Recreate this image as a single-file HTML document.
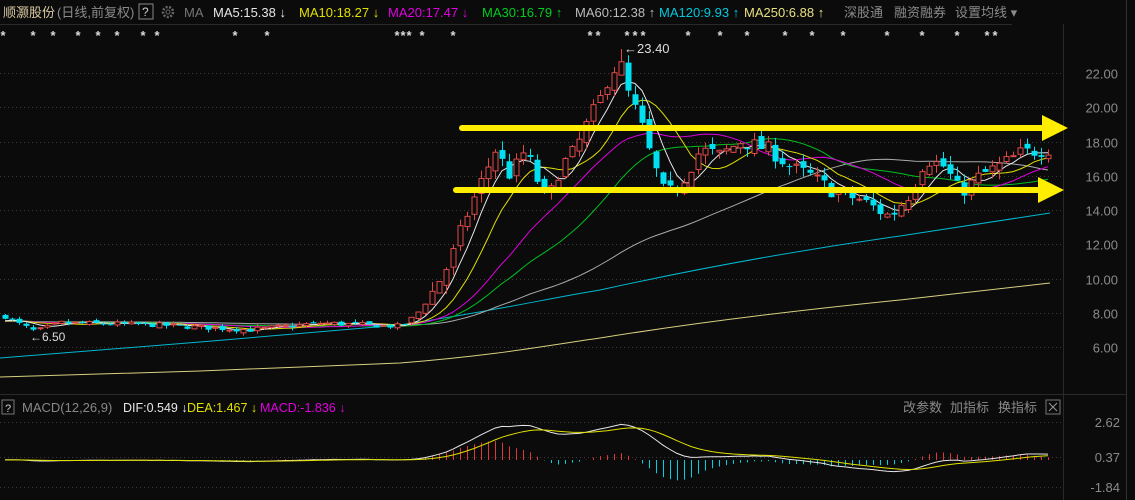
<!DOCTYPE html>
<html><head><meta charset="utf-8">
<style>
html,body{margin:0;padding:0;background:#0b0b0b;width:1135px;height:500px;overflow:hidden;font-family:"Liberation Sans","Noto Sans CJK SC",sans-serif;}
svg{position:absolute;left:0;top:0}
</style></head><body>
<svg id="s" width="1135" height="500" xmlns="http://www.w3.org/2000/svg" font-family="Liberation Sans, Noto Sans CJK SC, sans-serif">
<rect width="1135" height="500" fill="#0b0b0b"/>
<text x="3" y="17" font-size="13" fill="#d9c9a3">顺灏股份</text>
<text x="57" y="17" font-size="13" fill="#8a8a8a">(日线,前复权)</text>
<rect x="139" y="4" width="14" height="15" fill="none" stroke="#888" stroke-width="1"/>
<text x="142" y="16" font-size="12" fill="#ccc">?</text>
<circle cx="168" cy="12" r="5" fill="none" stroke="#666" stroke-width="2.5" stroke-dasharray="2 1.5"/>
<circle cx="168" cy="12" r="2" fill="#0b0b0b" stroke="#666"/>
<text x="184" y="17" font-size="13" fill="#777">MA</text>
<text x="213" y="17" font-size="13" fill="#e6e6e6">MA5:15.38 ↓</text>
<text x="299" y="17" font-size="13" fill="#e0e000">MA10:18.27 ↓</text>
<text x="388" y="17" font-size="13" fill="#e000e0">MA20:17.47 ↓</text>
<text x="482" y="17" font-size="13" fill="#00cc22">MA30:16.79 ↑</text>
<text x="575" y="17" font-size="13" fill="#bbb">MA60:12.38 ↑</text>
<text x="659" y="17" font-size="13" fill="#00c8dc">MA120:9.93 ↑</text>
<text x="744" y="17" font-size="13" fill="#e8e080">MA250:6.88 ↑</text>
<text x="844" y="17" font-size="13" fill="#8a8a8a">深股通</text>
<text x="894" y="17" font-size="13" fill="#8a8a8a">融资融券</text>
<text x="955" y="17" font-size="13" fill="#8a8a8a">设置均线 ▾</text>
<line x1="0" y1="24.5" x2="1012" y2="24.5" stroke="#2a2a2a"/>
<line x1="1063.5" y1="24" x2="1063.5" y2="500" stroke="#2a2a2a"/>
<line x1="1126.5" y1="0" x2="1126.5" y2="500" stroke="#333"/>
<line x1="0" y1="394.5" x2="1126" y2="394.5" stroke="#2a2a2a"/>
<g id="grid"></g>
<g id="axis" font-size="13" fill="#8a8a8a" text-anchor="end"></g>
<g id="stars" font-size="13" font-weight="bold" fill="#ddd" text-anchor="middle"></g>
<g id="lines" fill="none" stroke-width="1"></g>
<g id="candles"></g>
<text x="624" y="53" font-size="13" fill="#ddd">←23.40</text>
<text x="30" y="341" font-size="12" fill="#ddd">←6.50</text>
<line x1="462" y1="128" x2="1044" y2="128" stroke="#ffee00" stroke-width="6" stroke-linecap="round"/>
<polygon points="1042,115 1068,128 1042,141" fill="#ffee00"/>
<line x1="456" y1="190" x2="1040" y2="190" stroke="#ffee00" stroke-width="6" stroke-linecap="round"/>
<polygon points="1038,177 1064,190 1038,203" fill="#ffee00"/>
<rect x="2" y="400" width="12" height="14" fill="none" stroke="#777"/>
<text x="5" y="412" font-size="11" fill="#ccc">?</text>
<text x="22" y="412" font-size="13" fill="#888">MACD(12,26,9)</text>
<text x="123" y="412" font-size="12.5" fill="#e6e6e6">DIF:0.549 ↓</text>
<text x="187" y="412" font-size="12.5" fill="#e0e000">DEA:1.467 ↓</text>
<text x="260" y="412" font-size="12.5" fill="#e000e0">MACD:-1.836 ↓</text>
<text x="903" y="412" font-size="13" fill="#8a8a8a">改参数</text>
<text x="950" y="412" font-size="13" fill="#8a8a8a">加指标</text>
<text x="998" y="412" font-size="13" fill="#8a8a8a">换指标</text>
<rect x="1046" y="400" width="14" height="14" fill="none" stroke="#777"/>
<path d="M1049 403 L1057 411 M1057 403 L1049 411" stroke="#999"/>
<text x="1120" y="427" font-size="13" fill="#8a8a8a" text-anchor="end">2.62</text>
<text x="1120" y="462" font-size="13" fill="#8a8a8a" text-anchor="end">0.37</text>
<text x="1120" y="492" font-size="13" fill="#8a8a8a" text-anchor="end">-1.84</text>
<g id="macd" fill="none"></g>
</svg>
<script>
(function(){
var NS="http://www.w3.org/2000/svg";
function el(p,t,a){var e=document.createElementNS(NS,t);for(var k in a)e.setAttribute(k,a[k]);document.getElementById(p).appendChild(e);return e;}
function Y(p){return 73+(22-p)*17.125;}
for(var p=6;p<=22;p+=2){var y=Math.round(Y(p))+.5;el("grid","line",{x1:0,y1:y,x2:1063,y2:y,stroke:"#3a3a3a","stroke-dasharray":"1 3"});
var t=el("axis","text",{x:1118,y:y+5});t.textContent=p.toFixed(2);}
[422,457,487].forEach(function(y){el("grid","line",{x1:0,y1:y+.5,x2:1063,y2:y+.5,stroke:"#3a3a3a","stroke-dasharray":"1 3"});});
[3,33,53,78,98,117,143,157,235,267,397,403,409,422,453,590,598,627,635,643,688,720,747,785,812,843,887,922,957,987,995].forEach(function(x){var t=el("stars","text",{x:x,y:40});t.textContent="*";});
var K=[[5,7.8],[20,7.3],[35,6.9],[60,7.4],[150,7.3],[250,7.0],[320,7.4],[400,7.2],[415,7.8],[430,9],[450,11],[465,13.5],[480,15.5],[495,17.5],[510,16],[525,17.5],[540,15.3],[548,14.6],[560,16.5],[575,17.5],[588,19.2],[600,20.5],[610,22],[620,22.6],[628,20.8],[640,19.2],[650,17.2],[665,14.8],[680,15.5],[700,17.5],[720,17.2],[740,18],[770,17.5],[790,16.5],[810,16],[835,15],[860,14.6],[890,13.6],[910,15],[925,17],[945,16.5],[960,15],[980,16],[1000,16.6],[1020,17.3],[1050,17.6]];
function interp(x){for(var i=0;i<K.length-1;i++){if(x<=K[i+1][0]){var a=K[i],b=K[i+1],f=(x-a[0])/(b[0]-a[0]);return a[1]+(b[1]-a[1])*f;}}return K[K.length-1][1];}
var seed=7;function rnd(){seed=(seed*16807)%2147483647;return seed/2147483647;}
var N=150,xs=[],C=[],O=[],H=[],L=[];
var prev=7.8;
for(var i=0;i<N;i++){var x=5+i*7;xs.push(x);var base=interp(x);var vol=base>9?0.9:0.3;
var c=base+(rnd()-0.5)*vol;var o=prev+(rnd()-0.5)*vol*0.6;
var h=Math.max(o,c)+rnd()*vol*0.6,l=Math.min(o,c)-rnd()*vol*0.6;
C.push(c);O.push(o);H.push(h);L.push(l);prev=c;}
var pk=Math.round((620-5)/7);H[pk]=23.4;
function ma(n){var hist=7.5;var out=[];for(var i=0;i<N;i++){var s=0;for(var j=i-n+1;j<=i;j++)s+=(j>=0?C[j]:hist);out.push(s/n);}return out;}
function path(vals,col){var d="";for(var i=0;i<N;i++){d+=(i?"L":"M")+xs[i]+" "+Y(vals[i]).toFixed(1);}el("lines","path",{d:d,stroke:col});}
el("lines","path",{d:"M0 377 L200 371 L400 363 C500 355 550 345 600 338 C700 322 800 310 900 300 L1050 283",stroke:"#d8d080"});
el("lines","path",{d:"M0 358 L200 342 L400 325 C500 310 550 298 600 290 C700 268 800 250 900 236 L1050 213",stroke:"#00b8d0"});
path(ma(60),"#aaaaaa");
path(ma(30),"#00c020");
path(ma(20),"#e000e0");
path(ma(10),"#e0e000");
path(ma(5),"#e6e6e6");
for(var i=0;i<N;i++){var x=xs[i],up=C[i]>=O[i];var col=up?"#e04848":"#00e0f0";
el("candles","line",{x1:x+.5,y1:Y(H[i]),x2:x+.5,y2:Y(L[i]),stroke:col});
var yt=Y(Math.max(O[i],C[i])),yb=Y(Math.min(O[i],C[i]));var h=Math.max(1,yb-yt);
if(up)el("candles","rect",{x:x-2,y:yt,width:5,height:h,fill:"#0b0b0b",stroke:col,"stroke-width":1});
else el("candles","rect",{x:x-2.5,y:yt,width:6,height:h,fill:col});}
var e12=7.5,e26=7.5,dea=0,DIF=[],DEA=[];
for(var i=0;i<N;i++){e12=e12*11/13+C[i]*2/13;e26=e26*25/27+C[i]*2/27;var d=e12-e26;dea=dea*0.8+d*0.2;DIF.push(d);DEA.push(dea);}
var mx=Math.max.apply(null,DIF);var sc=2.3/mx;
function MY(v){return 460-v*sc*15.5;}
for(var i=0;i<N;i++){var b=2*(DIF[i]-DEA[i]);el("macd","line",{x1:xs[i]+.5,y1:460,x2:xs[i]+.5,y2:MY(b*0.8),stroke:b>=0?"#e03838":"#00d0e0"});}
var d1="",d2="";for(var i=0;i<N;i++){d1+=(i?"L":"M")+xs[i]+" "+MY(DIF[i]).toFixed(1);d2+=(i?"L":"M")+xs[i]+" "+MY(DEA[i]).toFixed(1);}
el("macd","path",{d:d1,stroke:"#e6e6e6"});el("macd","path",{d:d2,stroke:"#e0e000"});
})();
</script>
</body></html>
